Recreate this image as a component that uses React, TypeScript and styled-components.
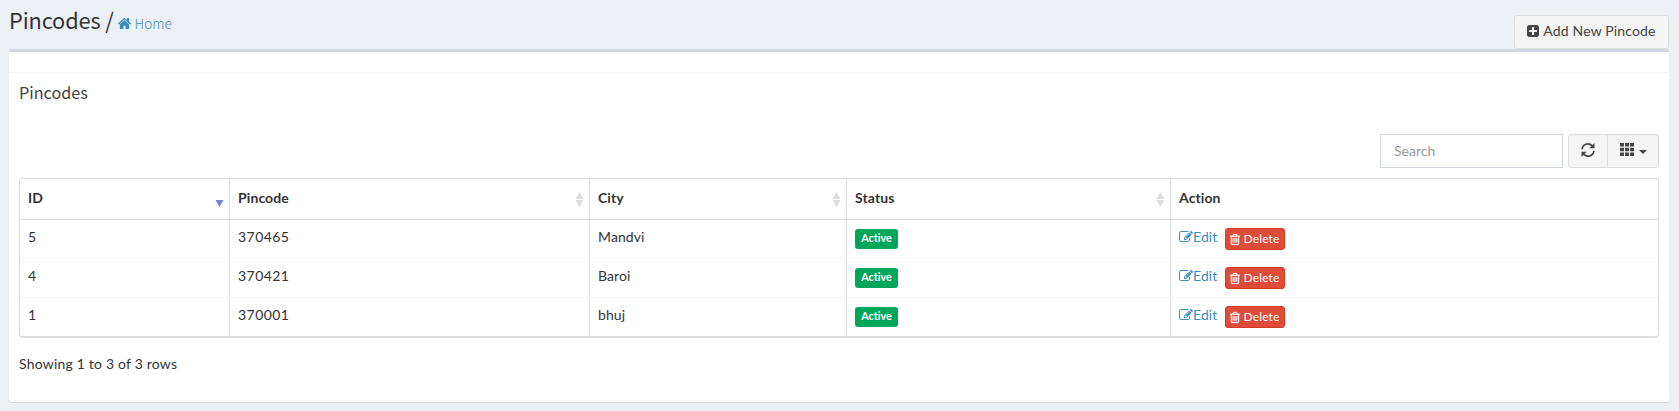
import React from 'react';
import styled, { createGlobalStyle, css } from 'styled-components';

const Global = createGlobalStyle`
  *, *::before, *::after { box-sizing: border-box; }
  body {
    margin: 0;
    min-height: 100vh;
    background: #ecf0f5;
    color: #333;
    font: 14px/20px Lato, "Open Sans", sans-serif;
  }
`;

const heading = css`
  margin: 0;
  font-family: "Noto Sans CJK SC", "Noto Sans", sans-serif;
  font-weight: 400;
`;

const Page = styled.main`
  padding: 0 10px 0 9px;
  height: 411px;
`;

const PageHeader = styled.header`
  display: flex;
  justify-content: space-between;
  height: 49px;
`;

const PageTitle = styled.h1`
  ${heading}
  display: flex;
  align-items: baseline;
  padding-top: 7px;
  font-size: 21.8px;
  line-height: 26px;
  letter-spacing: -0.15px;
`;

const HomeLink = styled.a`
  display: inline-flex;
  align-items: baseline;
  gap: 4px;
  margin-left: 4px;
  color: #3c8dbc;
  font-size: 13.5px;
  line-height: 20px;
  font-weight: 300;
  letter-spacing: 0;
`;

const Glyph = styled.svg<{ $w: number; $h?: number; $drop?: number }>`
  flex: none;
  width: ${p => p.$w}px;
  height: ${p => p.$h ?? p.$w}px;
  fill: currentColor;
  overflow: visible;
  margin-bottom: ${p => -(p.$drop ?? 0)}px;
`;

const button = css`
  border: 1px solid #ddd;
  background: #f4f4f4;
  color: #444;
  font: 14px/20px Lato, "Open Sans", sans-serif;
  display: flex;
  align-items: center;
  justify-content: center;
  height: 34px;
`;

const AddButton = styled.button`
  ${button}
  width: 155px;
  margin-top: 15px;
  padding: 0 0 2px;
  gap: 4px;
  border-radius: 3px;
  letter-spacing: 0.16px;
`;

const Box = styled.section`
  height: 353px;
  background: #fff;
  border-top: 3px solid #d2d6de;
  border-radius: 3px;
  box-shadow: 0 1px 1px rgba(0, 0, 0, 0.1);
`;

const BoxHeader = styled.div`
  height: 21px;
  border-bottom: 1px solid #f4f4f4;
`;

const BoxBody = styled.div`
  padding: 9px 10px;
`;

const BoxTitle = styled.h2`
  ${heading}
  font-size: 16.2px;
  line-height: 20px;
  color: #444;
`;

const Toolbar = styled.div`
  display: flex;
  justify-content: flex-end;
  margin: 32px 0 10px;
`;

const Search = styled.input`
  width: 183px;
  height: 34px;
  margin-right: 5px;
  padding: 5px 12px 7px 13px;
  border: 1px solid #d2d6de;
  border-radius: 0;
  font: 14px/20px Lato, "Open Sans", sans-serif;
  &::placeholder { color: #999; opacity: 1; }
`;

const ToolButton = styled.button<{ $side: 'left' | 'right' }>`
  ${button}
  padding: 0 0 3px;
  gap: 5px;
  width: ${p => (p.$side === 'left' ? 40 : 52)}px;
  border-radius: ${p => (p.$side === 'left' ? '3px 0 0 3px' : '0 3px 3px 0')};
  margin-left: ${p => (p.$side === 'left' ? 0 : -1)}px;
`;

const Caret = styled.span`
  margin-top: 5px;
  border: 4px solid transparent;
  border-top-color: currentColor;
  border-bottom: 0;
`;

const TableFrame = styled.div`
  border: 1px solid #ddd;
  border-bottom-width: 2px;
  border-radius: 4px;
  overflow: hidden;
`;

const Row = styled.div<{ $head?: boolean }>`
  display: grid;
  grid-template-columns: 210px 360px 257px 324px 1fr;
  height: ${p => (p.$head ? 41 : 39)}px;
  border-bottom: 1px solid ${p => (p.$head ? '#ddd' : '#f4f4f4')};
  font-weight: ${p => (p.$head ? 700 : 400)};
  &:last-child { height: 38px; border-bottom: 0; }
`;

const Cell = styled.div<{ $wide?: boolean }>`
  display: flex;
  align-items: flex-start;
  padding: 7px 8px 0;
  border-right: 1px solid #ddd;
  letter-spacing: ${p => (p.$wide ? '0.45px' : '0.1px')};
  &:last-child { border-right: 0; }
`;

const HeadCell = styled(Cell)`
  justify-content: space-between;
  padding: 9px 5px 0 8px;
  letter-spacing: 0.1px;
`;

const Badge = styled.span`
  width: 43px;
  height: 20px;
  margin-top: 2px;
  border-radius: 3px;
  background: #00a65a;
  color: #fff;
  font-size: 10.9px;
  line-height: 18px;
  font-weight: 700;
  letter-spacing: -0.05px;
  text-align: center;
`;

const EditLink = styled.a`
  display: flex;
  align-items: center;
  width: 46px;
  color: #3c8dbc;
`;

const DeleteButton = styled.button`
  display: flex;
  align-items: center;
  justify-content: center;
  gap: 3px;
  width: 60px;
  height: 22px;
  margin-top: 1px;
  padding: 0;
  border: 1px solid #d73925;
  border-radius: 3px;
  background: #dd4b39;
  color: #fff;
  font: 12px/18px Lato, "Open Sans", sans-serif;
  letter-spacing: 0.15px;
`;

const Summary = styled.p`
  margin: 16px 0 0;
  line-height: 20px;
  letter-spacing: 0.2px;
`;

const paths = {
  home: 'M1472 992v480q0 26-19 45t-45 19h-384v-384h-256v384h-384q-26 0-45-19t-19-45v-480q0-1 .5-3t.5-3l575-474 575 474q1 2 1 6zm223-69l-62 74q-8 9-21 11h-3q-13 0-21-7l-692-577-692 577q-12 8-24 7-13-2-21-11l-62-74q-8-10-7-23.5t11-21.5l719-599q32-26 76-26t76 26l244 204v-195q0-14 9-23t23-9h192q14 0 23 9t9 23v408l219 182q10 8 11 21.5t-7 23.5z',
  plus: 'M1408 960v-128q0-26-19-45t-45-19h-320v-320q0-26-19-45t-45-19h-128q-26 0-45 19t-19 45v320h-320q-26 0-45 19t-19 45v128q0 26 19 45t45 19h320v320q0 26 19 45t45 19h128q26 0 45-19t19-45v-320h320q26 0 45-19t19-45zm256-544v960q0 119-84.5 203.5t-203.5 84.5h-960q-119 0-203.5-84.5t-84.5-203.5v-960q0-119 84.5-203.5t203.5-84.5h960q119 0 203.5 84.5t84.5 203.5z',
  edit: 'M888 1184l116-116-152-152-116 116v56h96v96h56zm440-720q-16-16-33 1l-350 350q-17 17-1 33t33-1l350-350q17-17 1-33zm80 594v190q0 119-84.5 203.5t-203.5 84.5h-832q-119 0-203.5-84.5t-84.5-203.5v-832q0-119 84.5-203.5t203.5-84.5h832q63 0 117 25 15 7 18 23 3 17-9 29l-49 49q-14 14-32 8-23-6-45-6h-832q-66 0-113 47t-47 113v832q0 66 47 113t113 47h832q66 0 113-47t47-113v-126q0-13 9-22l64-64q15-15 35-7t20 29zm-96-738l288 288-672 672h-288v-288zm444 132l-92 92-288-288 92-92q28-28 68-28t68 28l152 152q28 28 28 68t-28 68z',
  trash: 'M704 736v576q0 14-9 23t-23 9h-64q-14 0-23-9t-9-23v-576q0-14 9-23t23-9h64q14 0 23 9t9 23zm256 0v576q0 14-9 23t-23 9h-64q-14 0-23-9t-9-23v-576q0-14 9-23t23-9h64q14 0 23 9t9 23zm256 0v576q0 14-9 23t-23 9h-64q-14 0-23-9t-9-23v-576q0-14 9-23t23-9h64q14 0 23 9t9 23zm128 724v-948h-896v948q0 22 7 40.5t14.5 27 10.5 8.5h832q3 0 10.5-8.5t14.5-27 7-40.5zm-672-1076h448l-48-117q-7-9-17-11h-317q-10 2-17 11zm928 32v64q0 14-9 23t-23 9h-96v948q0 83-47 143.5t-113 60.5h-832q-66 0-113-58.5t-47-141.5v-952h-96q-14 0-23-9t-9-23v-64q0-14 9-23t23-9h309l70-167q15-37 54-63t79-26h320q40 0 79 26t54 63l70 167h309q14 0 23 9t9 23z',
};

const HomeIcon = () => (
  <Glyph $w={13} $h={11} viewBox="89 250 1614 1290" preserveAspectRatio="none"><path d={paths.home} /></Glyph>
);
const PlusIcon = () => (
  <Glyph $w={12} viewBox="128 128 1536 1536"><path d={paths.plus} /></Glyph>
);
const EditIcon = () => (
  <Glyph $w={14} viewBox="0 0 1792 1792"><path d={paths.edit} /></Glyph>
);
const TrashIcon = () => (
  <Glyph $w={10} $h={11} viewBox="192 128 1408 1536"><path d={paths.trash} stroke="currentColor" strokeWidth="40" /></Glyph>
);
const RefreshIcon = () => (
  <Glyph $w={14} viewBox="0 0 14 14">
    <path d="M.3 6.3A6.6 6.6 0 0 1 11.6 2L13.5.1v5.1H8.4l2-2A4.9 4.9 0 0 0 2 6.3zM13.7 7.7A6.6 6.6 0 0 1 2.4 12L.5 13.9V8.8h5.1l-2 2A4.9 4.9 0 0 0 12 7.7z" />
  </Glyph>
);
const GridIcon = () => (
  <Glyph $w={14} $h={13} viewBox="0 0 14 13">
    <path d="M0 0h4v3.6H0zM5 0h4v3.6H5zM10 0h4v3.6h-4zM0 4.7h4v3.6H0zM5 4.7h4v3.6H5zM10 4.7h4v3.6h-4zM0 9.4h4V13H0zM5 9.4h4V13H5zM10 9.4h4V13h-4z" />
  </Glyph>
);
const SortIcon = ({ active }: { active?: boolean }) => (
  <Glyph $w={9} $h={16} viewBox="0 0 9 16">
    {active ? (
      <path fill="#7a80dd" d="M.5 8h8l-4 7z" />
    ) : (
      <path fill="#ddd" d="M.5 7h8L4.5 0zM.5 8h8l-4 7z" />
    )}
  </Glyph>
);

const SortSlot = styled.span`
  display: flex;
  padding-top: 4px;
`;

const columns = ['ID', 'Pincode', 'City', 'Status'];
const records = [
  { id: '5', pincode: '370465', city: 'Mandvi' },
  { id: '4', pincode: '370421', city: 'Baroi' },
  { id: '1', pincode: '370001', city: 'bhuj' },
];

export default function App() {
  return (
    <>
      <Global />
      <Page>
        <PageHeader>
          <PageTitle>
            Pincodes /
            <HomeLink><HomeIcon />Home</HomeLink>
          </PageTitle>
          <AddButton><PlusIcon />Add New Pincode</AddButton>
        </PageHeader>
        <Box>
          <BoxHeader />
          <BoxBody>
            <BoxTitle>Pincodes</BoxTitle>
            <Toolbar>
              <Search placeholder="Search" />
              <ToolButton $side="left" aria-label="Refresh"><RefreshIcon /></ToolButton>
              <ToolButton $side="right" aria-label="Columns"><GridIcon /><Caret /></ToolButton>
            </Toolbar>
            <TableFrame>
              <Row $head>
                {columns.map((name, i) => (
                  <HeadCell key={name}>
                    {name}
                    <SortSlot><SortIcon active={i === 0} /></SortSlot>
                  </HeadCell>
                ))}
                <HeadCell>Action</HeadCell>
              </Row>
              {records.map(r => (
                <Row key={r.id}>
                  <Cell>{r.id}</Cell>
                  <Cell $wide>{r.pincode}</Cell>
                  <Cell>{r.city}</Cell>
                  <Cell><Badge>Active</Badge></Cell>
                  <Cell>
                    <EditLink><EditIcon />Edit</EditLink>
                    <DeleteButton><TrashIcon />Delete</DeleteButton>
                  </Cell>
                </Row>
              ))}
            </TableFrame>
            <Summary>Showing 1 to 3 of 3 rows</Summary>
          </BoxBody>
        </Box>
      </Page>
    </>
  );
}
